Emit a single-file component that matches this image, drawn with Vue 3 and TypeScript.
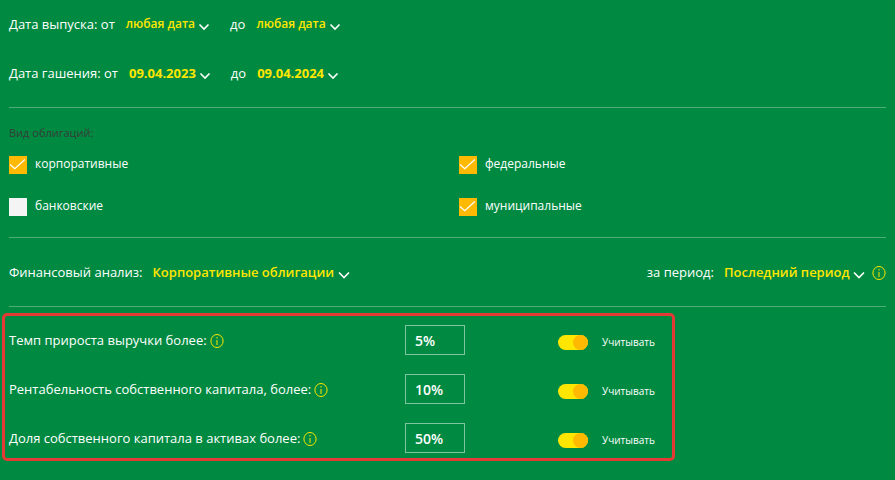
<script setup lang="ts">
import { reactive, ref } from 'vue'

interface DateRange {
  id: string
  label: string
  from: string
  to: string
  strong: boolean
}

interface BondKind {
  id: string
  label: string
  checked: boolean
}

interface Criterion {
  id: string
  label: string
  value: string
  enabled: boolean
}

const ranges: DateRange[] = [
  { id: 'issue', label: 'Дата выпуска: от', from: 'любая дата', to: 'любая дата', strong: false },
  { id: 'maturity', label: 'Дата гашения: от', from: '09.04.2023', to: '09.04.2024', strong: true },
]

const kinds = reactive<BondKind[]>([
  { id: 'corporate', label: 'корпоративные', checked: true },
  { id: 'federal', label: 'федеральные', checked: true },
  { id: 'bank', label: 'банковские', checked: false },
  { id: 'municipal', label: 'муниципальные', checked: true },
])

const criteria = reactive<Criterion[]>([
  { id: 'revenue', label: 'Темп прироста выручки более:', value: '5%', enabled: true },
  { id: 'roe', label: 'Рентабельность собственного капитала, более:', value: '10%', enabled: true },
  { id: 'equity', label: 'Доля собственного капитала в активах более:', value: '50%', enabled: true },
])

const analysis = ref('Корпоративные облигации')
const period = ref('Последний период')
</script>

<template>
  <form class="filters" @submit.prevent>
    <section class="block dates">
      <div v-for="range in ranges" :key="range.id" class="date-row">
        <span :id="range.id + '-from'" class="caption">{{ range.label }}</span>
        <button type="button" class="date" :class="{ strong: range.strong }" :aria-describedby="range.id + '-from'">
          {{ range.from }}
          <svg class="chevron" viewBox="0 0 12 8"><path d="M1.500 1.500 6 6l4.500-4.500" /></svg>
        </button>
        <span :id="range.id + '-to'" class="caption until">до</span>
        <button type="button" class="date" :class="{ strong: range.strong }" :aria-describedby="range.id + '-to'">
          {{ range.to }}
          <svg class="chevron" viewBox="0 0 12 8"><path d="M1.500 1.500 6 6l4.500-4.500" /></svg>
        </button>
      </div>
    </section>

    <fieldset class="block kinds">
      <legend>Вид облигаций:</legend>
      <div class="kind-grid">
        <label v-for="kind in kinds" :key="kind.id" class="kind">
          <input v-model="kind.checked" type="checkbox" />
          <svg class="tick" viewBox="0 0 18 18"><path d="M1 8.500 5.800 12.800 15.800 3.500" /></svg>
          <span>{{ kind.label }}</span>
        </label>
      </div>
    </fieldset>

    <section class="block analysis">
      <div class="choice">
        <label for="analysis" class="caption">Финансовый анализ:</label>
        <span class="dropdown">
          <select id="analysis" v-model="analysis">
            <option>Корпоративные облигации</option>
          </select>
          <svg class="chevron" viewBox="0 0 12 8"><path d="M1 1.500 6 6.500l5-5" /></svg>
        </span>
      </div>
      <div class="choice">
        <label for="period" class="caption">за период:</label>
        <span class="dropdown">
          <select id="period" v-model="period">
            <option>Последний период</option>
          </select>
          <svg class="chevron" viewBox="0 0 12 8"><path d="M1 1.500 6 6.500l5-5" /></svg>
        </span>
        <svg class="info" viewBox="0 0 14 14">
          <ellipse cx="7" cy="7" rx="6.100" ry="6.500" />
          <path d="M7 3v1.500M7 6v5" />
        </svg>
      </div>
    </section>

    <section class="criteria">
      <div v-for="item in criteria" :key="item.id" class="criterion">
        <div class="name">
          <label :for="item.id" class="caption">{{ item.label }}</label>
          <svg class="info" viewBox="0 0 14 14">
            <ellipse cx="7" cy="7" rx="6.100" ry="6.500" />
            <path d="M7 3v1.500M7 6v5" />
          </svg>
        </div>
        <input :id="item.id" v-model="item.value" class="amount" type="text" />
        <label class="toggle">
          <input v-model="item.enabled" type="checkbox" role="switch" />
          <span>Учитывать</span>
        </label>
      </div>
    </section>
  </form>
</template>

<style>
body {
  background: #008a41;
}
</style>

<style scoped>
.filters {
  color: #fff;
  font-family: 'Open Sans', 'Noto Sans', sans-serif;
  font-size: 13px;
  font-weight: 500;
  line-height: 20px;
}

.block {
  margin: 0 9px;
  padding: 0;
  border: 0;
  border-bottom: 1px solid #4dad7a;
}

.dates {
  display: flex;
  flex-direction: column;
  gap: 29px;
  padding: 14px 0 24px;
}

.date-row,
.choice,
.name {
  display: flex;
  align-items: center;
}

.caption {
  white-space: nowrap;
}

.date {
  display: flex;
  align-items: center;
  gap: 3px;
  margin-left: 11px;
  padding: 0;
  border: 0;
  background: none;
  color: #ffe600;
  font: 600 12px/20px 'Open Sans', 'Noto Sans', sans-serif;
  cursor: pointer;
}

.date.strong {
  font-size: 13px;
  font-weight: 700;
}

.until {
  margin-left: 20px;
}

.chevron {
  width: 12px;
  height: 8px;
  margin-top: 5px;
  fill: none;
  stroke: #fff;
  stroke-width: 1.6;
}

.kinds {
  padding-bottom: 21px;
}

.kinds legend {
  padding: 17px 0 15px;
  color: #373c39;
  font-size: 11px;
  line-height: 16px;
}

.kind-grid {
  display: grid;
  grid-template-columns: 450px 1fr;
  row-gap: 24px;
}

.kind {
  display: grid;
  grid-template-columns: 18px 1fr;
  column-gap: 8px;
  align-items: start;
  font-size: 12px;
  line-height: 16px;
}

.kind input {
  grid-area: 1 / 1;
  width: 18px;
  height: 18px;
  margin: 0;
  appearance: none;
  background: #f4f4f4;
}

.kind input:checked {
  background: #ffb900;
}

.tick {
  grid-area: 1 / 1;
  width: 18px;
  height: 18px;
  fill: none;
  stroke: #fff;
  stroke-width: 1.2;
  pointer-events: none;
  visibility: hidden;
}

.kind input:checked + .tick {
  visibility: visible;
}

.analysis {
  display: flex;
  justify-content: space-between;
  padding: 24px 0;
}

.dropdown {
  display: grid;
  align-items: center;
  margin-left: 10px;
}

.dropdown select {
  grid-area: 1 / 1;
  padding: 0 15px 0 0;
  border: 0;
  appearance: none;
  background: none;
  color: #ffe600;
  font: 600 13px/20px 'Open Sans', 'Noto Sans', sans-serif;
}

.dropdown .chevron {
  grid-area: 1 / 1;
  justify-self: end;
  pointer-events: none;
}

.info {
  flex: none;
  width: 14px;
  height: 14px;
  margin-top: 2px;
  margin-left: 3px;
  fill: none;
  stroke: #ffe600;
  stroke-width: 1;
}

.choice .info {
  margin-left: 7px;
}

.criteria {
  display: grid;
  gap: 19px;
  margin: 6px 220px 0 2px;
  padding: 9px 4px 5px;
  border: 3px solid #e53935;
  border-radius: 5px;
}

.criterion {
  display: grid;
  grid-template-columns: 396fr 153fr 110fr;
  align-items: center;
}

.amount {
  box-sizing: border-box;
  width: 60px;
  height: 30px;
  padding: 0 9px;
  border: 1px solid #80c5a0;
  background: none;
  color: #fff;
  font: 600 14px/20px 'Open Sans', 'Noto Sans', sans-serif;
}

.toggle {
  display: flex;
  align-items: center;
  gap: 14px;
  padding-top: 4px;
  font-size: 10px;
  line-height: 16px;
}

.toggle input {
  width: 30px;
  height: 15px;
  margin: 0;
  border-radius: 8px;
  appearance: none;
  background: #d9d9d9;
}

.toggle input::before {
  display: block;
  width: 15px;
  height: 15px;
  border-radius: 50%;
  background: #fff;
  content: '';
}

.toggle input:checked {
  background: #ffe600;
}

.toggle input:checked::before {
  margin-left: auto;
  background: #ffb900;
}
</style>
